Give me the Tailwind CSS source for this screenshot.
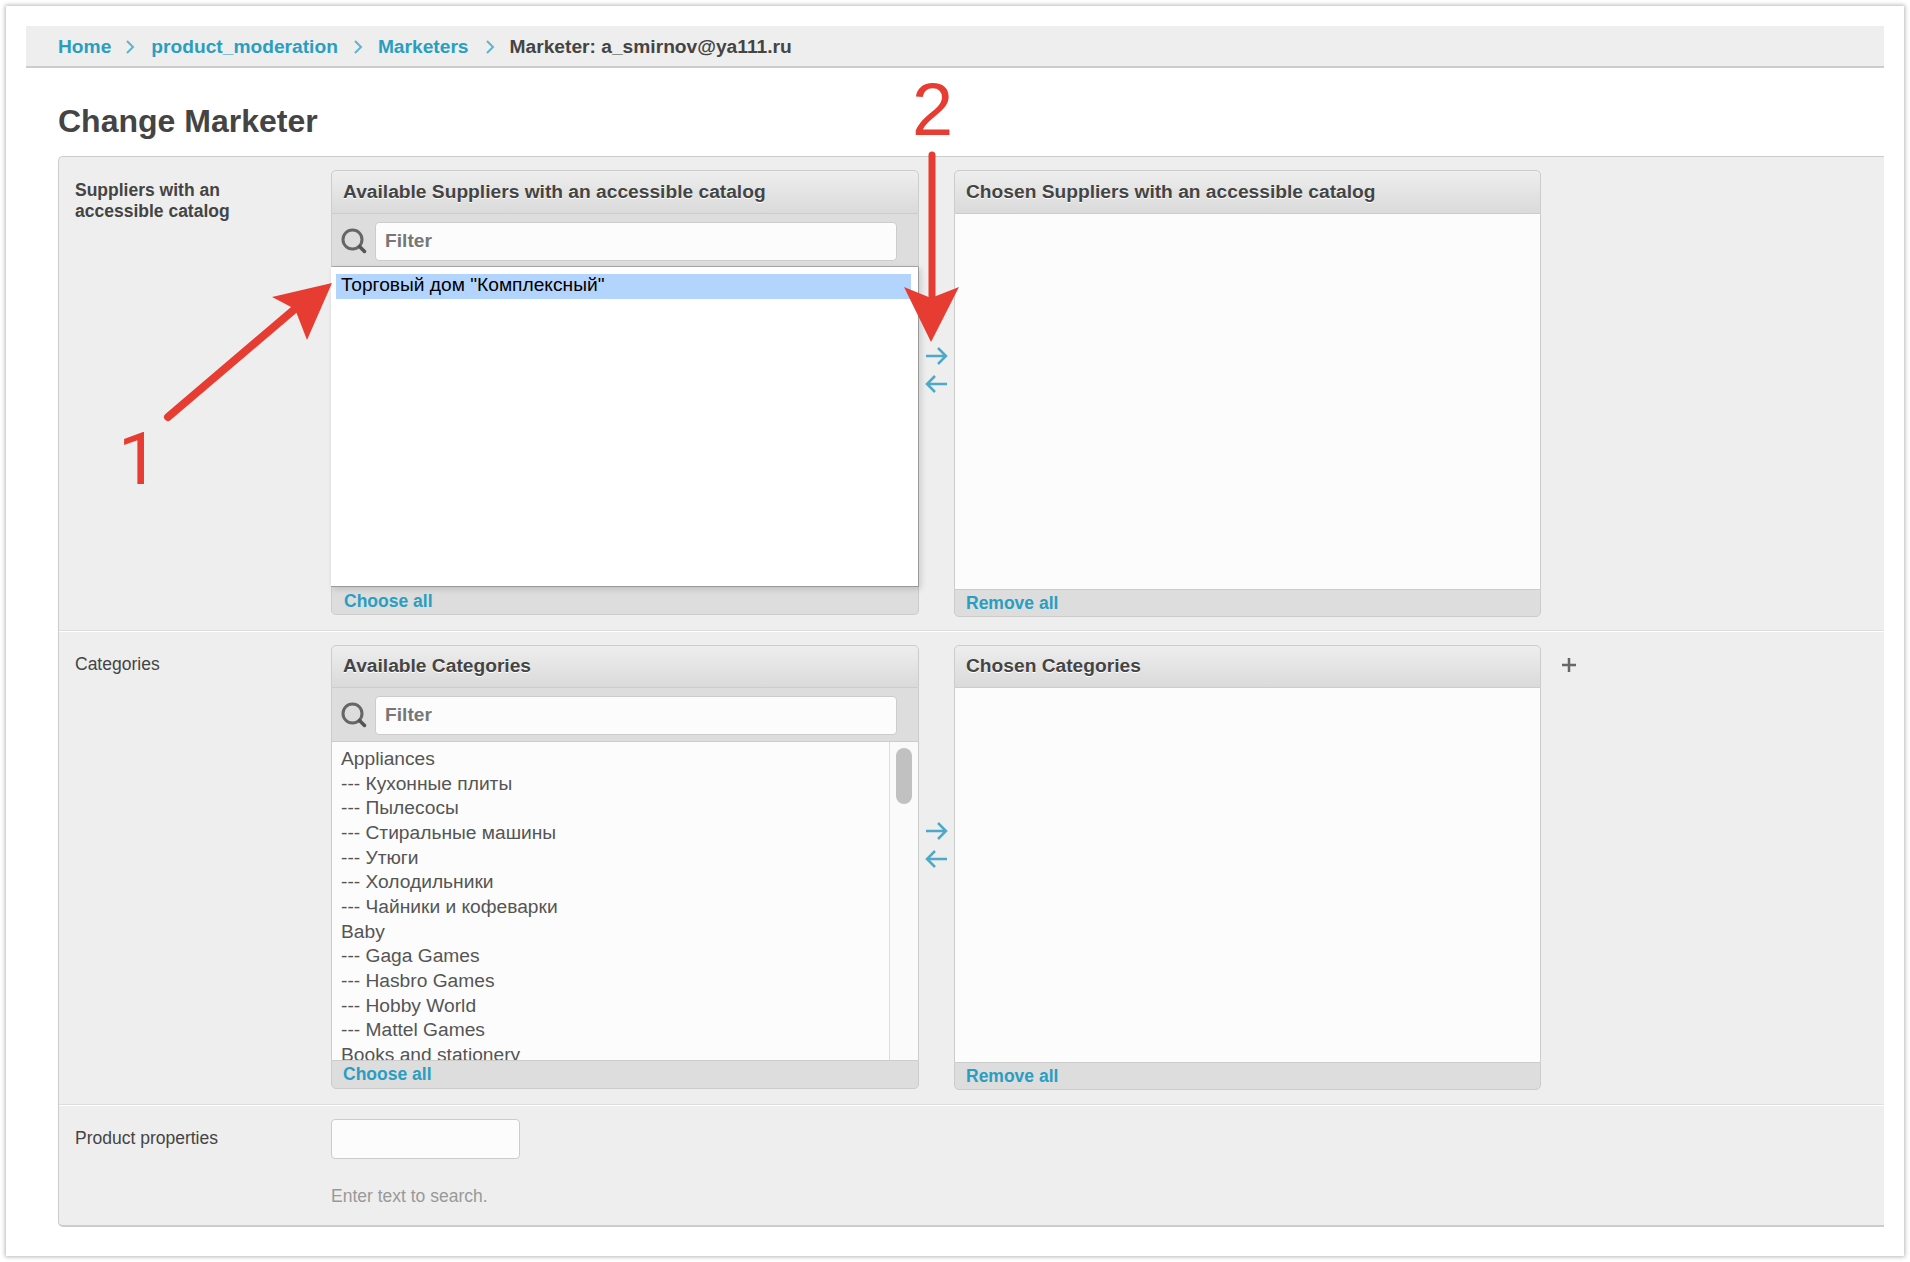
<!DOCTYPE html>
<html lang="en">
<head>
<meta charset="utf-8">
<title>Change Marketer</title>
<script src="https://cdn.jsdelivr.net/npm/@tailwindcss/browser@4"></script>
</head>
<body class="bg-white font-['Liberation_Sans',Arial,sans-serif]">
<div class="relative w-[1910px] h-[1262px] overflow-hidden bg-white pt-[6px] pl-[6px] pr-[6px] pb-[6px]">
  <div class="h-[1250px] bg-white pt-[20px] pl-[20px] pr-[20px] shadow-[0_0_4px_1px_rgba(0,0,0,0.28)]">

    <nav class="flex items-center h-[42px] pt-[2px] bg-[#eeeeee] border-b-2 border-[#cccccc] pl-[32px] text-[19.2px] font-bold text-[#2a9ec1]">
      <a>Home</a>
      <svg class="ml-[14px] mr-[16px]" width="10" height="16" viewBox="0 0 10 16" fill="none" stroke="#5fb3cd" stroke-width="2"><path d="M2 2l6 6-6 6"/></svg>
      <a>product_moderation</a>
      <svg class="ml-[15px] mr-[15px]" width="10" height="16" viewBox="0 0 10 16" fill="none" stroke="#5fb3cd" stroke-width="2"><path d="M2 2l6 6-6 6"/></svg>
      <a>Marketers</a>
      <svg class="ml-[16px] mr-[15px]" width="10" height="16" viewBox="0 0 10 16" fill="none" stroke="#5fb3cd" stroke-width="2"><path d="M2 2l6 6-6 6"/></svg>
      <span class="text-[#444444]">Marketer: a_smirnov@ya111.ru</span>
    </nav>

    <h1 class="pl-[32px] h-[88px] pt-[33px] text-[32px] leading-[40px] font-bold text-[#444444]">Change Marketer</h1>

    <div class="ml-[32px] h-[1071px] bg-[#eeeeee] border-t border-l border-b-2 border-[#cccccc] rounded-tl-[5px] rounded-bl-[5px]">

      <!-- Row 1 -->
      <div class="flex h-[460px] pt-[13px] border-b border-[#dddddd] box-content">
        <div class="w-[272px] shrink-0 pl-[16px] pt-[10px] text-[17.5px] leading-[21px] font-bold text-[#444444]">Suppliers with an<br>accessible catalog</div>
        <div class="flex">
          <div class="w-[588px] h-[445px] flex flex-col">
            <div class="h-[44px] shrink-0 flex items-center pl-[11px] rounded-t-[5px] border border-[#cccccc] bg-gradient-to-b from-[#eeeeee] to-[#dadada] text-[19.2px] font-bold text-[#444444] [text-shadow:0_1px_0_#ffffff]">Available Suppliers with an accessible catalog</div>
            <div class="h-[53px] shrink-0 flex items-center pl-[9px] pt-[2px] bg-[#dddddd] border-x border-[#cccccc] border-b border-b-[#aaaaaa]">
              <svg width="26" height="26" viewBox="0 0 26 26" fill="none" class="shrink-0"><circle cx="11.5" cy="11.5" r="9.5" stroke="#666666" stroke-width="3"/><path d="M18.5 18.5l5 5" stroke="#555555" stroke-width="3.5" stroke-linecap="round"/></svg>
              <input placeholder="Filter" class="ml-[8px] w-[522px] h-[39px] pl-[9px] bg-[#fcfcfc] border border-[#cccccc] rounded-[4px] text-[19.2px] font-bold placeholder:text-[#777777]">
            </div>
            <div class="h-[320px] shrink-0 bg-white border-r border-b border-[#999999] pt-[7px] pl-[5px] pr-[7px] shadow-[2px_2px_6px_rgba(0,0,0,0.15)] relative">
              <div class="h-[25px] bg-[#b3d4fd] pl-[5px] text-[19.2px] leading-[22px] text-black">Торговый дом "Комплексный"</div>
            </div>
            <div class="flex-1 pl-[12px] pt-[3px] rounded-b-[5px] bg-[#dddddd] border-x border-b border-[#cccccc] text-[17.5px] leading-[22px] font-bold text-[#2a9ec1]">Choose all</div>
          </div>
          <div class="w-[35px] flex flex-col items-center pt-[177px] gap-[10px]">
            <svg width="23" height="18" viewBox="0 0 23 18" fill="none" stroke="#4fa9c6" stroke-width="2.5"><path d="M1 9h20M13 1l8 8-8 8"/></svg>
            <svg width="23" height="18" viewBox="0 0 23 18" fill="none" stroke="#4fa9c6" stroke-width="2.5"><path d="M22 9H2M10 1L2 9l8 8"/></svg>
          </div>
          <div class="w-[587px] h-[447px] flex flex-col">
            <div class="h-[44px] shrink-0 flex items-center pl-[11px] rounded-t-[5px] border border-[#cccccc] bg-gradient-to-b from-[#eeeeee] to-[#dadada] text-[19.2px] font-bold text-[#444444] [text-shadow:0_1px_0_#ffffff]">Chosen Suppliers with an accessible catalog</div>
            <div class="h-[375px] shrink-0 bg-[#fcfcfc] border-x border-[#cccccc]"></div>
            <div class="flex-1 flex items-center pl-[11px] rounded-b-[5px] bg-[#dddddd] border border-[#cccccc] text-[17.5px] font-bold text-[#2a9ec1]">Remove all</div>
          </div>
        </div>
      </div>

      <!-- Row 2 -->
      <div class="flex h-[459px] pt-[13px] border-t border-white border-b border-b-[#dddddd] box-content">
        <div class="w-[272px] shrink-0 pl-[16px] pt-[9px] text-[17.5px] leading-[21px] text-[#444444]">Categories</div>
        <div class="flex">
          <div class="w-[588px] h-[444px] flex flex-col">
            <div class="h-[43px] shrink-0 flex items-center pl-[11px] rounded-t-[5px] border border-[#cccccc] bg-gradient-to-b from-[#eeeeee] to-[#dadada] text-[19.2px] font-bold text-[#444444] [text-shadow:0_1px_0_#ffffff]">Available Categories</div>
            <div class="h-[54px] shrink-0 flex items-center pl-[9px] pt-[1px] bg-[#dddddd] border-x border-[#cccccc] border-b">
              <svg width="26" height="26" viewBox="0 0 26 26" fill="none" class="shrink-0"><circle cx="11.5" cy="11.5" r="9.5" stroke="#666666" stroke-width="3"/><path d="M18.5 18.5l5 5" stroke="#555555" stroke-width="3.5" stroke-linecap="round"/></svg>
              <input placeholder="Filter" class="ml-[8px] w-[522px] h-[39px] pl-[9px] bg-[#fcfcfc] border border-[#cccccc] rounded-[4px] text-[19.2px] font-bold placeholder:text-[#777777]">
            </div>
            <div class="h-[318px] shrink-0 flex overflow-hidden bg-[#fcfcfc] border-x border-[#cccccc]">
              <ul class="flex-1 pt-[5px] pl-[9px] text-[19.2px] leading-[24.65px] text-[#555555]">
                <li>Appliances</li>
                <li>--- Кухонные плиты</li>
                <li>--- Пылесосы</li>
                <li>--- Стиральные машины</li>
                <li>--- Утюги</li>
                <li>--- Холодильники</li>
                <li>--- Чайники и кофеварки</li>
                <li>Baby</li>
                <li>--- Gaga Games</li>
                <li>--- Hasbro Games</li>
                <li>--- Hobby World</li>
                <li>--- Mattel Games</li>
                <li>Books and stationery</li>
              </ul>
              <div class="w-[29px] shrink-0 border-l border-[#dddddd] bg-[#fafafa] pt-[6px] pl-[6px]">
                <div class="w-[16px] h-[56px] rounded-full bg-[#c1c1c1]"></div>
              </div>
            </div>
            <div class="flex-1 pl-[11px] pt-[2px] rounded-b-[5px] bg-[#dddddd] border border-[#cccccc] text-[17.5px] leading-[22px] font-bold text-[#2a9ec1]">Choose all</div>
          </div>
          <div class="w-[35px] flex flex-col items-center pt-[177px] gap-[10px]">
            <svg width="23" height="18" viewBox="0 0 23 18" fill="none" stroke="#4fa9c6" stroke-width="2.5"><path d="M1 9h20M13 1l8 8-8 8"/></svg>
            <svg width="23" height="18" viewBox="0 0 23 18" fill="none" stroke="#4fa9c6" stroke-width="2.5"><path d="M22 9H2M10 1L2 9l8 8"/></svg>
          </div>
          <div class="w-[587px] h-[445px] flex flex-col">
            <div class="h-[43px] shrink-0 flex items-center pl-[11px] rounded-t-[5px] border border-[#cccccc] bg-gradient-to-b from-[#eeeeee] to-[#dadada] text-[19.2px] font-bold text-[#444444] [text-shadow:0_1px_0_#ffffff]">Chosen Categories</div>
            <div class="h-[374px] shrink-0 bg-[#fcfcfc] border-x border-[#cccccc]"></div>
            <div class="flex-1 flex items-center pl-[11px] rounded-b-[5px] bg-[#dddddd] border border-[#cccccc] text-[17.5px] font-bold text-[#2a9ec1]">Remove all</div>
          </div>
          <svg class="ml-[20px] mt-[12px]" width="16" height="16" viewBox="0 0 16 16" stroke="#666666" stroke-width="2.5"><path d="M8 1v14M1 8h14"/></svg>
        </div>
      </div>

      <!-- Row 3 -->
      <div class="flex pt-[13px] border-t border-white">
        <div class="w-[272px] shrink-0 pl-[16px] pt-[9px] text-[17.5px] leading-[21px] text-[#444444]">Product properties</div>
        <div>
          <input class="block w-[189px] h-[40px] bg-[#fcfcfc] border border-[#cccccc] rounded-[4px]">
          <p class="mt-[26px] text-[17.5px] leading-[22px] text-[#999999]">Enter text to search.</p>
        </div>
      </div>
    </div>
  </div>

  <!-- Annotations over the screenshot -->
  <svg class="absolute left-0 top-0 pointer-events-none" width="1910" height="1262" viewBox="0 0 1910 1262" fill="none">
    <path d="M168 417L296 308" stroke="#e73c31" stroke-width="8" stroke-linecap="round"/>
    <path d="M332 283L272 297L295 309L307 340Z" fill="#e73c31"/>
    <path d="M932 155V300" stroke="#e73c31" stroke-width="7" stroke-linecap="round"/>
    <path d="M931 342L904 287L931 298L959 287Z" fill="#e73c31"/>
  </svg>
  <span class="absolute left-[118px] top-[419px] font-['Roboto',sans-serif] text-[73px] leading-[80px] text-[#e73c31]">1</span>
  <span class="absolute left-[912px] top-[70px] text-[74px] leading-[80px] text-[#e73c31]">2</span>
</div>
</body>
</html>
